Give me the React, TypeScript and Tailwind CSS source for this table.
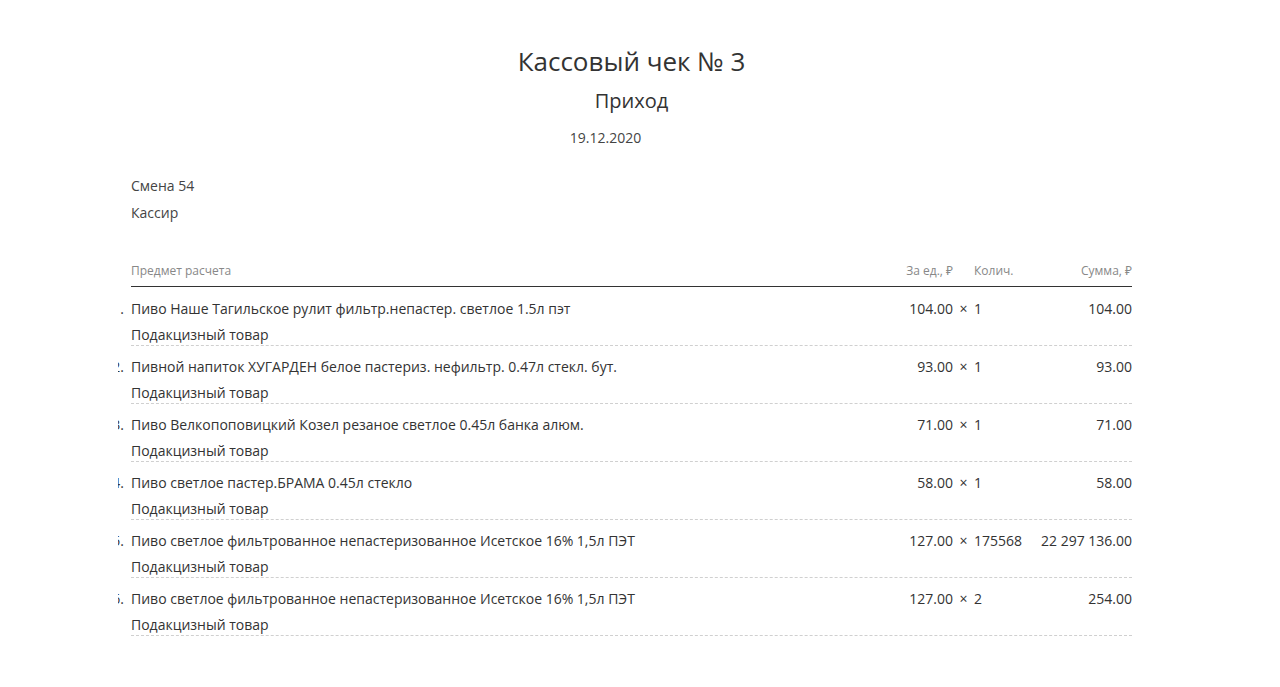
import React from "react";

const items = [
  { n: "1.", name: "Пиво Наше Тагильское рулит фильтр.непастер. светлое 1.5л пэт", price: "104.00", qty: "1", sum: "104.00" },
  { n: "2.", name: "Пивной напиток ХУГАРДЕН белое пастериз. нефильтр. 0.47л стекл. бут.", price: "93.00", qty: "1", sum: "93.00" },
  { n: "3.", name: "Пиво Велкопоповицкий Козел резаное светлое 0.45л банка алюм.", price: "71.00", qty: "1", sum: "71.00" },
  { n: "4.", name: "Пиво светлое пастер.БРАМА 0.45л стекло", price: "58.00", qty: "1", sum: "58.00" },
  { n: "5.", name: "Пиво светлое фильтрованное непастеризованное Исетское 16% 1,5л ПЭТ", price: "127.00", qty: "175568", sum: "22 297 136.00" },
  { n: "6.", name: "Пиво светлое фильтрованное непастеризованное Исетское 16% 1,5л ПЭТ", price: "127.00", qty: "2", sum: "254.00" },
];

export default function App() {
  return (
    <div className="min-h-[687px] w-[1280px] bg-white text-[#333] font-['Open_Sans','Noto_Sans',sans-serif]">
      <div className="ml-[131px] w-[1001px]">
        <div className="flex flex-col items-center pt-[43px]">
          <div className="text-[26px] leading-[36px] text-[#333]">Кассовый чек № 3</div>
          <div className="mt-[9px] text-[20px] leading-[26px] text-[#333]">Приход</div>
          <div className="mt-[14px] -ml-[52px] text-[14px] leading-[20px] text-[#444]">19.12.2020</div>
        </div>
        <div className="pt-[28px] flex flex-col gap-[7px] text-[14px] leading-[20px] text-[#444]">
          <div>Смена 54</div>
          <div>Кассир</div>
        </div>
        <div className="mt-[39px] flex items-end border-b border-[#333] pb-[6px] text-[12px] leading-[18px] text-[#888]">
          <div className="flex-1">Предмет расчета</div>
          <div className="w-[100px] text-right">За ед., ₽</div>
          <div className="w-[84px] pl-[21px]">Колич.</div>
          <div className="w-[95px] text-right">Сумма, ₽</div>
        </div>
        <div className="flex flex-col pt-[1px]">
          {items.map((it, i) => (
            <div key={i} className="border-b border-dashed border-[#d0d0d0] pt-[11px] text-[14px] leading-[20px] text-[#333]">
              <div className="flex">
                <div className="-ml-[13px] mr-[7px] w-[6px] overflow-hidden flex justify-end">
                  <span className="whitespace-nowrap">{it.n}</span>
                </div>
                <div className="flex-1">{it.name}</div>
                <div className="w-[100px] text-right">{it.price}</div>
                <div className="w-[84px] flex">
                  <span className="w-[21px] text-center">×</span>
                  <span>{it.qty}</span>
                </div>
                <div className="w-[95px] text-right whitespace-nowrap">{it.sum}</div>
              </div>
              <div className="mt-[6px]">Подакцизный товар</div>
            </div>
          ))}
        </div>
      </div>
    </div>
  );
}
